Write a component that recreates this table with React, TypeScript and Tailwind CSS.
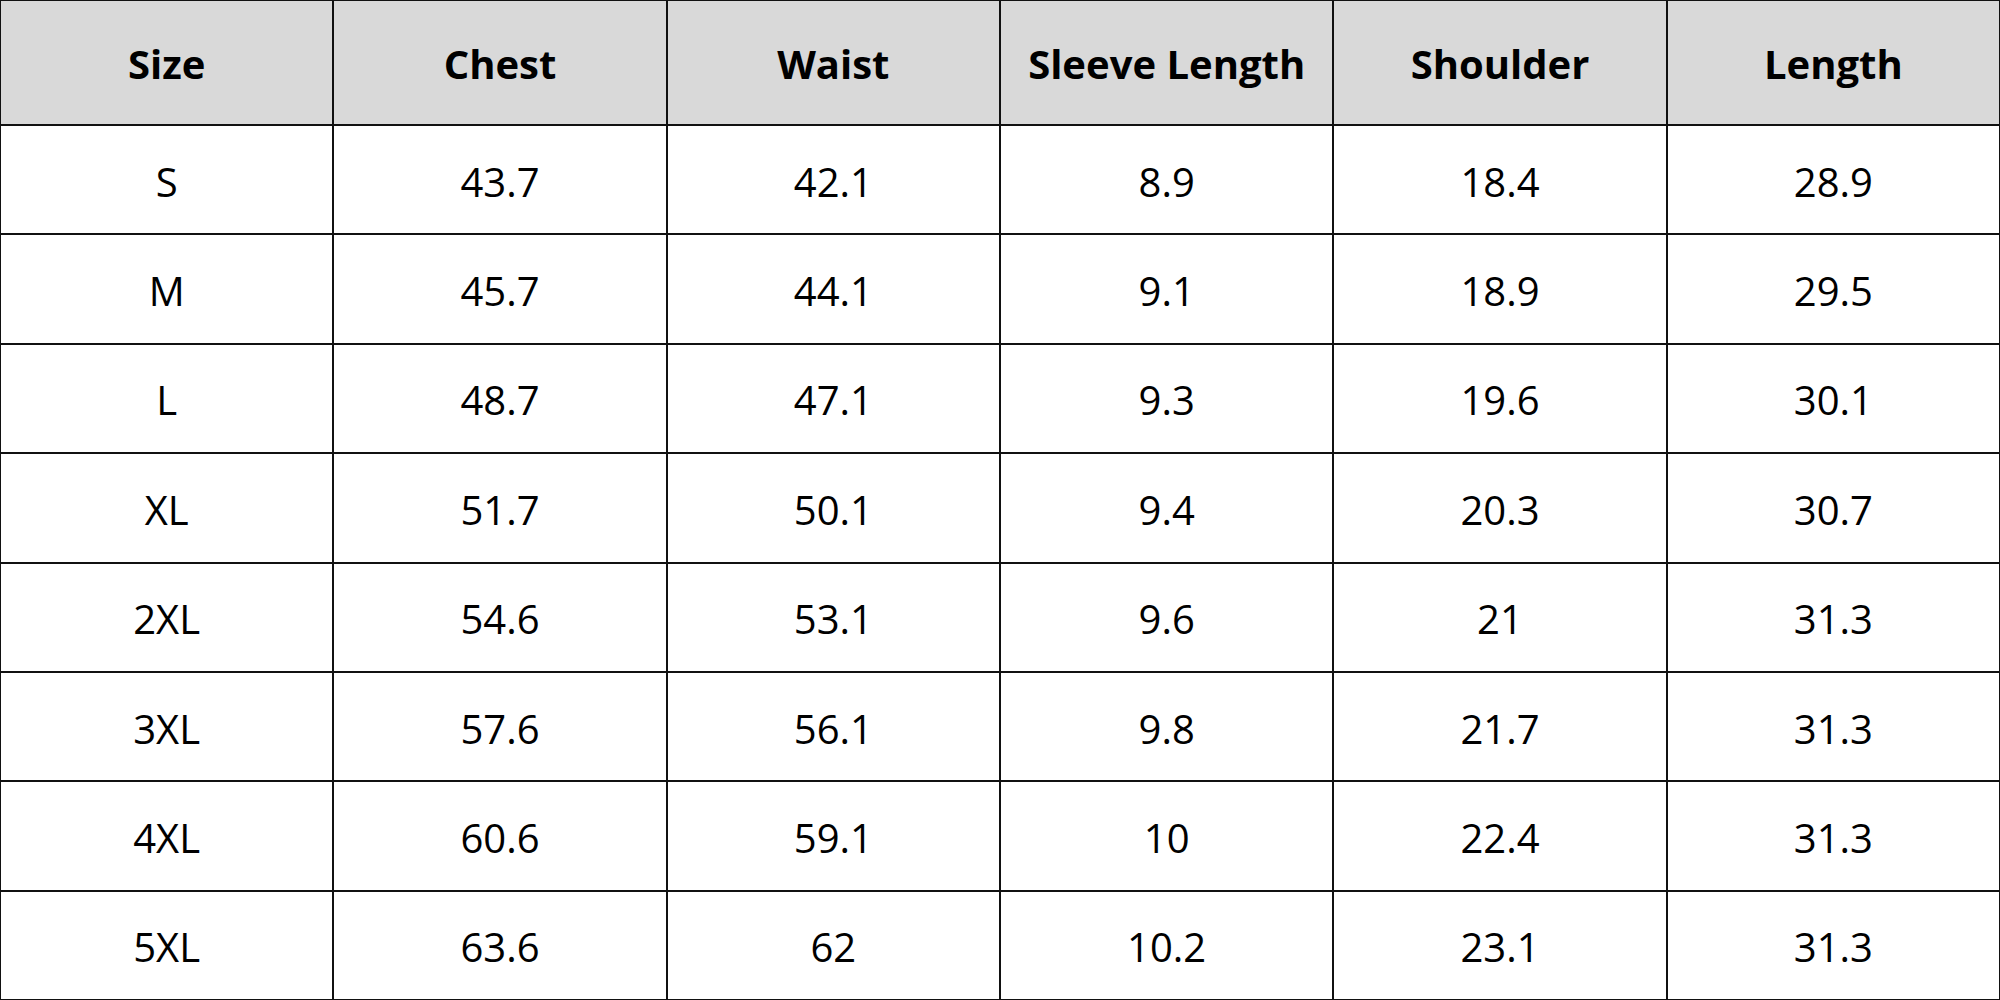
import React from "react";

const headers = ["Size", "Chest", "Waist", "Sleeve Length", "Shoulder", "Length"];
const rows = [
  ["S", "43.7", "42.1", "8.9", "18.4", "28.9"],
  ["M", "45.7", "44.1", "9.1", "18.9", "29.5"],
  ["L", "48.7", "47.1", "9.3", "19.6", "30.1"],
  ["XL", "51.7", "50.1", "9.4", "20.3", "30.7"],
  ["2XL", "54.6", "53.1", "9.6", "21", "31.3"],
  ["3XL", "57.6", "56.1", "9.8", "21.7", "31.3"],
  ["4XL", "60.6", "59.1", "10", "22.4", "31.3"],
  ["5XL", "63.6", "62", "10.2", "23.1", "31.3"],
];

export default function App() {
  return (
    <div
      className="w-[2000px] h-[1000px] bg-[#111111] p-px grid grid-cols-6 grid-rows-[123px_repeat(8,1fr)] gap-[2px] text-black"
      style={{ fontFamily: '"Open Sans", "Liberation Sans", sans-serif' }}
    >
      {headers.map((h) => (
        <div key={h} className="bg-[#d9d9d9] flex items-center justify-center text-[40px] font-bold pt-[2px]">
          {h}
        </div>
      ))}
      {rows.map((r, i) =>
        r.map((c, j) => (
          <div key={`${i}-${j}`} className="bg-white flex items-center justify-center text-[40px] font-normal pt-[4px]">
            {c}
          </div>
        ))
      )}
    </div>
  );
}
